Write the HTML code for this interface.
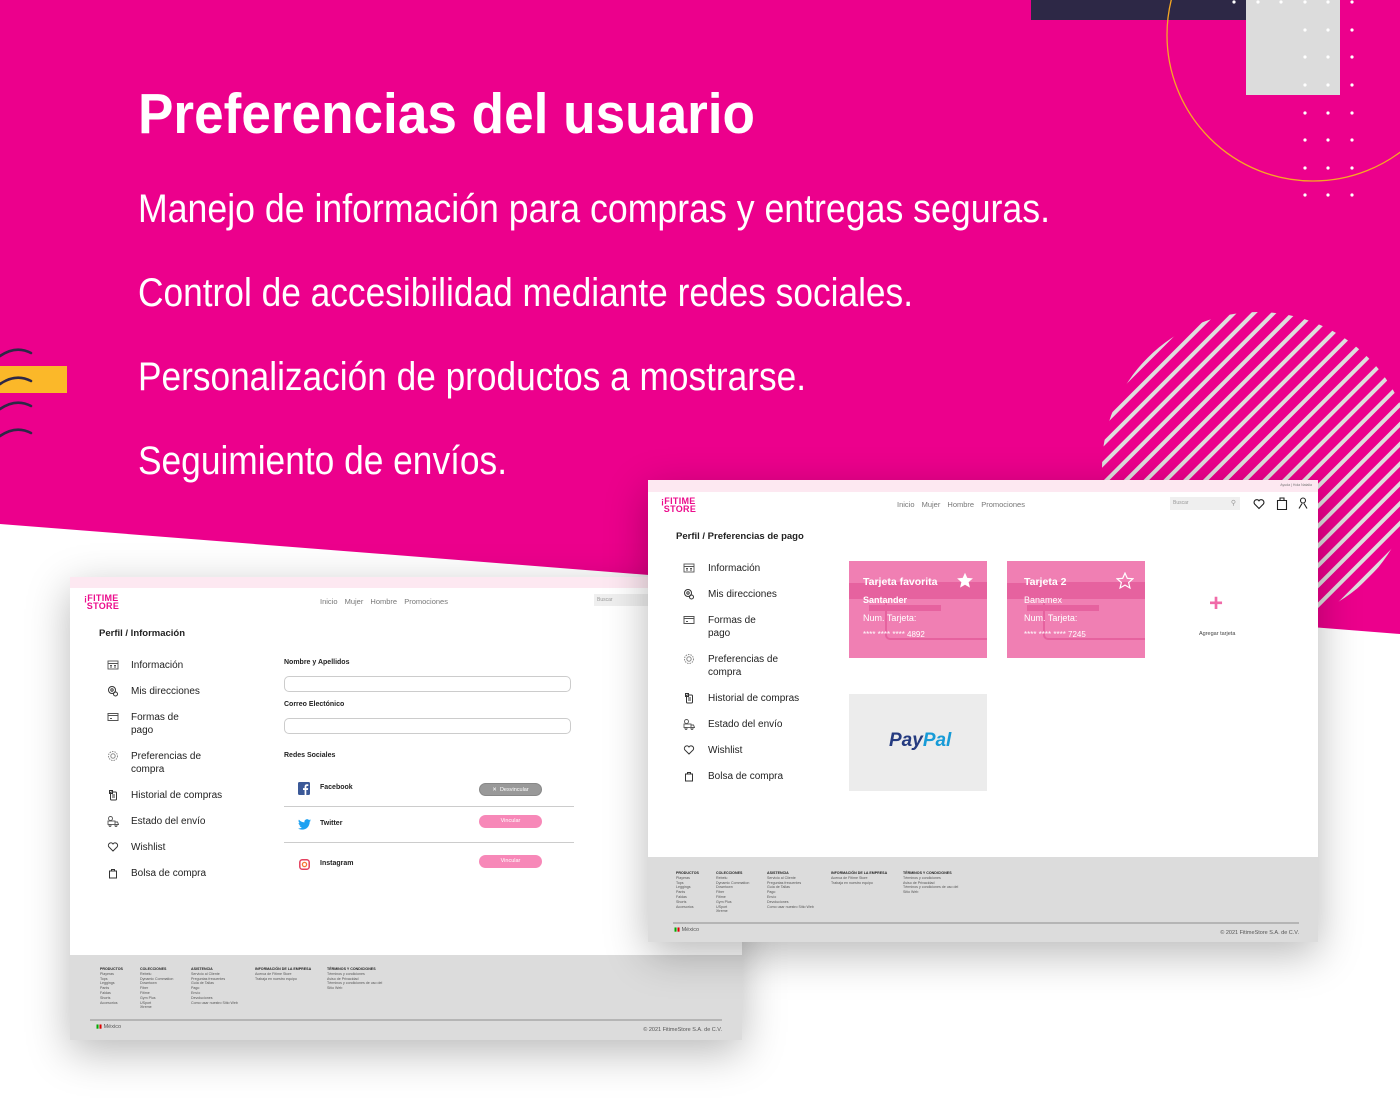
<!DOCTYPE html>
<html><head><meta charset="utf-8">
<style>
*{margin:0;padding:0;box-sizing:border-box}
body{width:1400px;height:1099px;overflow:hidden;background:#fff;position:relative;font-family:"Liberation Sans",sans-serif;color:#222}
.abs{position:absolute}
.panel{position:absolute;background:#fff;box-shadow:0 12px 40px rgba(0,0,0,.28);overflow:hidden}
.strip{position:absolute;left:0;right:0;top:0;height:12px;background:#fde8f1}
.t{position:absolute;white-space:nowrap}
.nav{font-size:7.5px;color:#777;word-spacing:5px}
.side{font-size:10px;color:#222;line-height:13px}
.ic{position:absolute;width:12px;height:12px}
.foot{position:absolute;left:0;right:0;bottom:0;height:85px;background:#dcdcdc}
.fc{position:absolute;font-size:3.6px;line-height:4.8px;color:#555}
.fc b{color:#222;display:block}
.logo{position:absolute;font-weight:bold;color:#ec0c8c;font-size:9px;line-height:8px;letter-spacing:.3px}
.btn{position:absolute;height:13px;border-radius:7px;font-size:5.5px;color:#fff;text-align:center;line-height:13px}
.card{position:absolute;width:138px;height:97px;background:#f07fb3;overflow:hidden;color:#fff}
.card .in{position:absolute;left:36px;top:21px;width:120px;height:58px;border:2px solid #e6629f;border-radius:5px}
.card .bar{position:absolute;left:0;right:0;top:22px;height:16px;background:#e6629f}
</style></head><body>

<!-- pink background -->
<svg class="abs" style="left:0;top:0" width="1400" height="1099">
<polygon points="0,0 1400,0 1400,634 0,524" fill="#ec008c"/>
<rect x="1031" y="0" width="215" height="20" fill="#2d2846"/>
<rect x="1246" y="0" width="94" height="95" fill="#dcdcdc"/>
<circle cx="1313" cy="35" r="146" fill="none" stroke="#f7a823" stroke-width="1.3"/>
<g fill="#fff">
<circle cx="1234" cy="2" r="1.6"/>
<circle cx="1258" cy="2" r="1.6"/><circle cx="1281" cy="2" r="1.6"/>
<circle cx="1305" cy="2" r="1.6"/><circle cx="1328" cy="2" r="1.6"/><circle cx="1352" cy="2" r="1.6"/>
<circle cx="1305" cy="30" r="1.6"/><circle cx="1328" cy="30" r="1.6"/><circle cx="1352" cy="30" r="1.6"/>
<circle cx="1305" cy="57" r="1.6"/><circle cx="1328" cy="57" r="1.6"/><circle cx="1352" cy="57" r="1.6"/>
<circle cx="1305" cy="85" r="1.6"/><circle cx="1328" cy="85" r="1.6"/><circle cx="1352" cy="85" r="1.6"/>
<circle cx="1305" cy="113" r="1.6"/><circle cx="1328" cy="113" r="1.6"/><circle cx="1352" cy="113" r="1.6"/>
<circle cx="1305" cy="140" r="1.6"/><circle cx="1328" cy="140" r="1.6"/><circle cx="1352" cy="140" r="1.6"/>
<circle cx="1305" cy="168" r="1.6"/><circle cx="1328" cy="168" r="1.6"/><circle cx="1352" cy="168" r="1.6"/>
<circle cx="1305" cy="195" r="1.6"/><circle cx="1328" cy="195" r="1.6"/><circle cx="1352" cy="195" r="1.6"/>
</g>
<defs>
<clipPath id="cc"><circle cx="1258" cy="468" r="156"/></clipPath>
<pattern id="st" width="14" height="14" patternUnits="userSpaceOnUse" patternTransform="rotate(-45)">
<rect x="0" y="0" width="14" height="4" fill="#dedede"/></pattern>
</defs>
<rect x="1090" y="300" width="320" height="340" fill="url(#st)" clip-path="url(#cc)"/>
<rect x="0" y="366" width="67" height="27" fill="#fbb829"/>
<g fill="none" stroke="#2d2846" stroke-width="2.6" stroke-linecap="round">
<path d="M0,356 Q16,345 31,353"/><path d="M0,384 Q16,373 31,381"/>
<path d="M0,409 Q16,398 31,406"/><path d="M0,436 Q16,425 31,433"/>
</g>
<g fill="#fff" font-family="Liberation Sans, sans-serif">
<text x="138" y="133" font-size="57" font-weight="bold" textLength="617" lengthAdjust="spacingAndGlyphs">Preferencias del usuario</text>
<text x="138" y="222" font-size="40" textLength="912" lengthAdjust="spacingAndGlyphs">Manejo de información para compras y entregas seguras.</text>
<text x="138" y="306" font-size="40" textLength="775" lengthAdjust="spacingAndGlyphs">Control de accesibilidad mediante redes sociales.</text>
<text x="138" y="390" font-size="40" textLength="668" lengthAdjust="spacingAndGlyphs">Personalización de productos a mostrarse.</text>
<text x="138" y="474" font-size="40" textLength="369" lengthAdjust="spacingAndGlyphs">Seguimiento de envíos.</text>
</g>
</svg>

<!-- LEFT PANEL -->
<div class="panel" style="left:70px;top:577px;width:672px;height:463px">
<div class="strip" style="height:11px"></div>
<div class="logo" style="left:14px;top:17px">¡FITIME<br>&nbsp;STORE</div>
<div class="t nav" style="left:250px;top:20px">Inicio Mujer Hombre Promociones</div>
<div class="abs" style="left:524px;top:17px;width:60px;height:12px;background:#efefef;font-size:5px;color:#999;padding:3px">Buscar</div>
<div class="t" style="left:29px;top:51px;font-size:9.5px;font-weight:bold">Perfil / Información</div>

<div class="side">
<svg class="ic" style="left:37px;top:82px" viewBox="0 0 12 12" fill="none" stroke="#555" stroke-width=".9"><rect x="1" y="2" width="10" height="8"/><path d="M1 4.5h10M3 6.5h2M3 8h2M7 6.5h2M7 8h2"/></svg>
<div class="t" style="left:61px;top:82px">Información</div>
<svg class="ic" style="left:37px;top:108px" viewBox="0 0 12 12" fill="none" stroke="#333" stroke-width="1"><circle cx="5" cy="5" r="3.5"/><circle cx="5" cy="5" r="1.2"/><circle cx="8.5" cy="9" r="2"/></svg>
<div class="t" style="left:61px;top:108px">Mis direcciones</div>
<svg class="ic" style="left:37px;top:134px" viewBox="0 0 12 12" fill="none" stroke="#555" stroke-width="1"><rect x="1" y="2.5" width="10" height="7"/><path d="M1 4.5h10M3 7.5h2"/></svg>
<div class="t" style="left:61px;top:134px">Formas de<br>pago</div>
<svg class="ic" style="left:37px;top:173px" viewBox="0 0 12 12" fill="none" stroke="#888" stroke-width="1"><circle cx="6" cy="6" r="4.5" stroke-dasharray="1.5 1"/><circle cx="6" cy="6" r="2.2"/></svg>
<div class="t" style="left:61px;top:173px">Preferencias de<br>compra</div>
<svg class="ic" style="left:37px;top:212px" viewBox="0 0 12 12" fill="none" stroke="#333" stroke-width="1"><rect x="3.5" y="3" width="6" height="8" rx="1"/><path d="M2.5 1.5h3v3h-3zM5 6h3M5 8h3"/></svg>
<div class="t" style="left:61px;top:212px">Historial de compras</div>
<svg class="ic" style="left:37px;top:238px" viewBox="0 0 12 12" fill="none" stroke="#555" stroke-width=".9"><circle cx="3.5" cy="3.5" r="2"/><rect x="1" y="6" width="7" height="3.5"/><path d="M8 7h2.5l1 2.5H8"/><circle cx="3" cy="10.5" r="1"/><circle cx="9" cy="10.5" r="1"/></svg>
<div class="t" style="left:61px;top:238px">Estado del envío</div>
<svg class="ic" style="left:37px;top:264px" viewBox="0 0 12 12" fill="none" stroke="#333" stroke-width="1"><path d="M6 10 L1.8 5.8 A2.3 2.3 0 0 1 6 3 A2.3 2.3 0 0 1 10.2 5.8Z"/></svg>
<div class="t" style="left:61px;top:264px">Wishlist</div>
<svg class="ic" style="left:37px;top:290px" viewBox="0 0 12 12" fill="none" stroke="#333" stroke-width="1"><path d="M2.5 4h7v7h-7z"/><path d="M4.5 4V2.5h3V4"/></svg>
<div class="t" style="left:61px;top:290px">Bolsa de compra</div>
</div>

<div class="t" style="left:214px;top:82px;font-size:7px;font-weight:bold">Nombre y Apellidos</div>
<div class="abs" style="left:214px;top:99px;width:287px;height:16px;border:1.3px solid #ccc;border-radius:5px"></div>
<div class="t" style="left:214px;top:124px;font-size:7px;font-weight:bold">Correo Electónico</div>
<div class="abs" style="left:214px;top:141px;width:287px;height:16px;border:1.3px solid #ccc;border-radius:5px"></div>
<div class="t" style="left:214px;top:175px;font-size:7px;font-weight:bold">Redes Sociales</div>

<svg class="abs" style="left:228px;top:205px" width="12" height="13" viewBox="0 0 12 13"><rect width="12" height="13" rx="1.5" fill="#3b5998"/><path d="M8.3 13V8h1.6l.3-1.9H8.3V5c0-.6.2-1 1-1h1V2.4c-.2 0-.8-.1-1.4-.1-1.4 0-2.3.8-2.3 2.4v1.4H5V8h1.6v5z" fill="#fff"/></svg>
<div class="t" style="left:250px;top:207px;font-size:7px;font-weight:bold">Facebook</div>
<div class="btn" style="left:409px;top:206px;width:63px;background:#999;border:1px solid #888">✕&nbsp; Desvincular</div>
<div class="abs" style="left:214px;top:229px;width:290px;height:1px;background:#ccc"></div>
<svg class="abs" style="left:228px;top:242px" width="13" height="11" viewBox="0 0 24 20"><path d="M24 2.4c-.9.4-1.8.6-2.8.8 1-.6 1.8-1.6 2.2-2.7-1 .6-2 1-3.1 1.2A4.9 4.9 0 0 0 11.9 6 14 14 0 0 1 1.7.9a4.9 4.9 0 0 0 1.5 6.6c-.8 0-1.6-.3-2.2-.6 0 2.4 1.7 4.4 3.9 4.8-.7.2-1.5.2-2.2.1.6 2 2.4 3.4 4.6 3.4A9.9 9.9 0 0 1 0 17.3 14 14 0 0 0 7.5 19.5c9.1 0 14-7.5 14-14v-.6c1-.7 1.8-1.6 2.5-2.5z" fill="#1da1f2"/></svg>
<div class="t" style="left:250px;top:243px;font-size:7px;font-weight:bold">Twitter</div>
<div class="btn" style="left:409px;top:238px;width:63px;background:#f788b8">Vincular</div>
<div class="abs" style="left:214px;top:265px;width:290px;height:1px;background:#ccc"></div>
<svg class="abs" style="left:229px;top:282px" width="11" height="11" viewBox="0 0 11 11"><rect x=".8" y=".8" width="9.4" height="9.4" rx="2.5" fill="none" stroke="#e4405f" stroke-width="1.5"/><circle cx="5.5" cy="5.5" r="2.1" fill="none" stroke="#f77737" stroke-width="1.3"/></svg>
<div class="t" style="left:250px;top:283px;font-size:7px;font-weight:bold">Instagram</div>
<div class="btn" style="left:409px;top:278px;width:63px;background:#f788b8">Vincular</div>

<div class="foot">
<div class="fc" style="left:30px;top:12px"><b>PRODUCTOS</b>Playeras<br>Tops<br>Leggings<br>Pants<br>Faldas<br>Shorts<br>Accesorios</div>
<div class="fc" style="left:70px;top:12px"><b>COLECCIONES</b>Rebelu<br>Dynamic Commation<br>Downtown<br>Fiber<br>Fitime<br>Gym Plus<br>USport<br>Xtreme</div>
<div class="fc" style="left:121px;top:12px"><b>ASISTENCIA</b>Servicio al Cliente<br>Preguntas frecuentes<br>Guía de Tallas<br>Pago<br>Envío<br>Devoluciones<br>Como usar nuestro Sitio Web</div>
<div class="fc" style="left:185px;top:12px"><b>INFORMACIÓN DE LA EMPRESA</b>Acerca de Fitime Store<br>Trabaja en nuestro equipo</div>
<div class="fc" style="left:257px;top:12px"><b>TÉRMINOS Y CONDICIONES</b>Términos y condiciones<br>Aviso de Privacidad<br>Términos y condiciones de uso del<br>Sitio Web</div>
<div class="abs" style="left:20px;top:64px;width:632px;height:1.5px;background:#b5b5b5"></div>
<div class="t" style="left:26px;top:69px;font-size:5.5px;color:#555"><span style="color:#0a0">▮</span><span style="color:#d00">▮</span> México</div>
<div class="t" style="right:20px;top:72px;font-size:5.5px;color:#555">© 2021 FitimeStore S.A. de C.V.</div>
</div>
</div>

<!-- RIGHT PANEL -->
<div class="panel" style="left:648px;top:480px;width:670px;height:462px">
<div class="strip"></div>
<div class="t" style="right:6px;top:3px;font-size:3.5px;color:#777">Ayuda | Hola Natalia</div>
<div class="logo" style="left:13px;top:17px">¡FITIME<br>&nbsp;STORE</div>
<div class="t nav" style="left:249px;top:20px">Inicio Mujer Hombre Promociones</div>
<div class="abs" style="left:522px;top:17px;width:70px;height:13px;background:#efefef;font-size:5px;color:#999;padding:3px">Buscar<span style="position:absolute;right:4px;top:2px;font-size:7px">⚲</span></div>
<svg class="abs" style="left:605px;top:18px" width="12" height="12" viewBox="0 0 12 12" fill="none" stroke="#222" stroke-width="1.1"><path d="M6 10.5 L1.6 6 A2.5 2.5 0 0 1 6 2.8 A2.5 2.5 0 0 1 10.4 6Z"/></svg>
<svg class="abs" style="left:628px;top:16px" width="12" height="14" viewBox="0 0 12 14" fill="none" stroke="#222" stroke-width="1.1"><path d="M1.5 4.5h9v9h-9z"/><path d="M4 4.5V2h4v2.5"/></svg>
<svg class="abs" style="left:650px;top:17px" width="10" height="12" viewBox="0 0 10 12" fill="none" stroke="#222" stroke-width="1.1"><circle cx="5" cy="3.5" r="2.5"/><path d="M1 11.5 L4 6.5 M9 11.5 L6 6.5"/></svg>
<div class="t" style="left:28px;top:51px;font-size:9.5px;font-weight:bold">Perfil / Preferencias de pago</div>

<div class="side">
<svg class="ic" style="left:35px;top:82px" viewBox="0 0 12 12" fill="none" stroke="#555" stroke-width=".9"><rect x="1" y="2" width="10" height="8"/><path d="M1 4.5h10M3 6.5h2M3 8h2M7 6.5h2M7 8h2"/></svg>
<div class="t" style="left:60px;top:82px">Información</div>
<svg class="ic" style="left:35px;top:108px" viewBox="0 0 12 12" fill="none" stroke="#333" stroke-width="1"><circle cx="5" cy="5" r="3.5"/><circle cx="5" cy="5" r="1.2"/><circle cx="8.5" cy="9" r="2"/></svg>
<div class="t" style="left:60px;top:108px">Mis direcciones</div>
<svg class="ic" style="left:35px;top:134px" viewBox="0 0 12 12" fill="none" stroke="#555" stroke-width="1"><rect x="1" y="2.5" width="10" height="7"/><path d="M1 4.5h10M3 7.5h2"/></svg>
<div class="t" style="left:60px;top:134px">Formas de<br>pago</div>
<svg class="ic" style="left:35px;top:173px" viewBox="0 0 12 12" fill="none" stroke="#888" stroke-width="1"><circle cx="6" cy="6" r="4.5" stroke-dasharray="1.5 1"/><circle cx="6" cy="6" r="2.2"/></svg>
<div class="t" style="left:60px;top:173px">Preferencias de<br>compra</div>
<svg class="ic" style="left:35px;top:212px" viewBox="0 0 12 12" fill="none" stroke="#333" stroke-width="1"><rect x="3.5" y="3" width="6" height="8" rx="1"/><path d="M2.5 1.5h3v3h-3zM5 6h3M5 8h3"/></svg>
<div class="t" style="left:60px;top:212px">Historial de compras</div>
<svg class="ic" style="left:35px;top:238px" viewBox="0 0 12 12" fill="none" stroke="#555" stroke-width=".9"><circle cx="3.5" cy="3.5" r="2"/><rect x="1" y="6" width="7" height="3.5"/><path d="M8 7h2.5l1 2.5H8"/><circle cx="3" cy="10.5" r="1"/><circle cx="9" cy="10.5" r="1"/></svg>
<div class="t" style="left:60px;top:238px">Estado del envío</div>
<svg class="ic" style="left:35px;top:264px" viewBox="0 0 12 12" fill="none" stroke="#333" stroke-width="1"><path d="M6 10 L1.8 5.8 A2.3 2.3 0 0 1 6 3 A2.3 2.3 0 0 1 10.2 5.8Z"/></svg>
<div class="t" style="left:60px;top:264px">Wishlist</div>
<svg class="ic" style="left:35px;top:290px" viewBox="0 0 12 12" fill="none" stroke="#333" stroke-width="1"><path d="M2.5 4h7v7h-7z"/><path d="M4.5 4V2.5h3V4"/></svg>
<div class="t" style="left:60px;top:290px">Bolsa de compra</div>
</div>

<div class="card" style="left:201px;top:81px">
<div class="in"></div><div class="bar"></div>
<div class="abs" style="left:20px;top:44px;width:72px;height:6px;background:#e6629f"></div>
<div class="t" style="left:14px;top:15px;font-size:10.5px;font-weight:bold">Tarjeta favorita</div>
<div class="t" style="left:14px;top:34px;font-size:9px;font-weight:bold">Santander</div>
<div class="t" style="left:14px;top:52px;font-size:9px">Num. Tarjeta:</div>
<div class="t" style="left:14px;top:69px;font-size:8px">**** **** **** 4892</div>
<svg class="abs" style="left:107px;top:11px" width="18" height="17" viewBox="0 0 24 23"><path d="M12 1l3.1 7 7.6.7-5.8 5 1.8 7.4L12 17.2 5.3 21.1l1.8-7.4-5.8-5 7.6-.7z" fill="#fff"/></svg>
</div>
<div class="card" style="left:359px;top:81px">
<div class="in"></div><div class="bar"></div>
<div class="abs" style="left:20px;top:44px;width:72px;height:6px;background:#e6629f"></div>
<div class="t" style="left:17px;top:15px;font-size:10.5px;font-weight:bold">Tarjeta 2</div>
<div class="t" style="left:17px;top:34px;font-size:9px">Banamex</div>
<div class="t" style="left:17px;top:52px;font-size:9px">Num. Tarjeta:</div>
<div class="t" style="left:17px;top:69px;font-size:8px">**** **** **** 7245</div>
<svg class="abs" style="left:109px;top:11px" width="18" height="17" viewBox="0 0 24 23"><path d="M12 1.5l3.1 7 7.6.7-5.8 5 1.8 7.4L12 17.7 5.3 21.6l1.8-7.4-5.8-5 7.6-.7z" fill="none" stroke="#fff" stroke-width="1.6"/></svg>
</div>
<div class="t" style="left:561px;top:112px;font-size:24px;line-height:24px;color:#f06aa8;font-weight:bold">+</div>
<div class="t" style="left:551px;top:151px;font-size:5.5px;color:#444">Agregar tarjeta</div>
<div class="abs" style="left:201px;top:214px;width:138px;height:97px;background:#ececec"></div>
<div class="t" style="left:241px;top:250px;font-size:19px;font-weight:bold;font-style:italic"><span style="color:#253b80">Pay</span><span style="color:#179bd7">Pal</span></div>

<div class="foot">
<div class="fc" style="left:28px;top:14px"><b>PRODUCTOS</b>Playeras<br>Tops<br>Leggings<br>Pants<br>Faldas<br>Shorts<br>Accesorios</div>
<div class="fc" style="left:68px;top:14px"><b>COLECCIONES</b>Rebelu<br>Dynamic Commation<br>Downtown<br>Fiber<br>Fitime<br>Gym Plus<br>USport<br>Xtreme</div>
<div class="fc" style="left:119px;top:14px"><b>ASISTENCIA</b>Servicio al Cliente<br>Preguntas frecuentes<br>Guía de Tallas<br>Pago<br>Envío<br>Devoluciones<br>Como usar nuestro Sitio Web</div>
<div class="fc" style="left:183px;top:14px"><b>INFORMACIÓN DE LA EMPRESA</b>Acerca de Fitime Store<br>Trabaja en nuestro equipo</div>
<div class="fc" style="left:255px;top:14px"><b>TÉRMINOS Y CONDICIONES</b>Términos y condiciones<br>Aviso de Privacidad<br>Términos y condiciones de uso del<br>Sitio Web</div>
<div class="abs" style="left:25px;top:65px;width:626px;height:1.5px;background:#b5b5b5"></div>
<div class="t" style="left:26px;top:70px;font-size:5.5px;color:#555"><span style="color:#0a0">▮</span><span style="color:#d00">▮</span> México</div>
<div class="t" style="right:19px;top:73px;font-size:5.5px;color:#555">© 2021 FitimeStore S.A. de C.V.</div>
</div>
</div>
</body></html>
